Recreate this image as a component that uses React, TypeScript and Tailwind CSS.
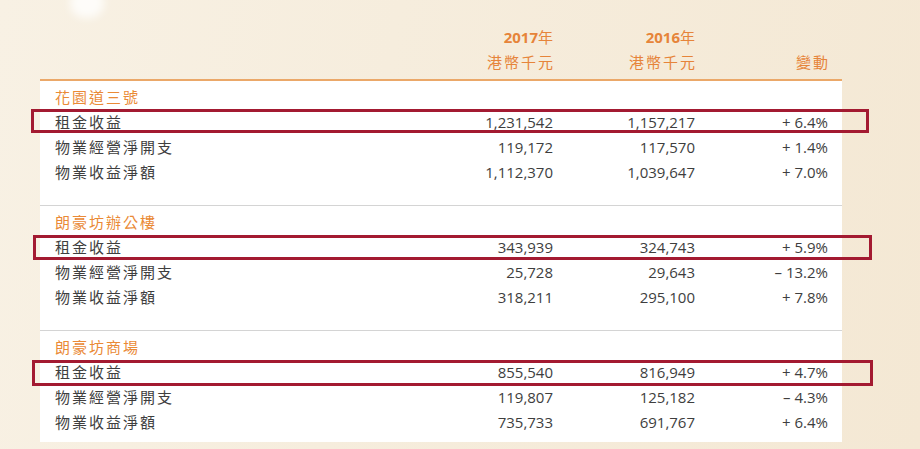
import React from "react";

type Row = { label: string; a: string; b: string; c: string };
type Section = { title: string; rows: Row[] };

const sections: Section[] = [
  {
    title: "花園道三號",
    rows: [
      { label: "租金收益", a: "1,231,542", b: "1,157,217", c: "+ 6.4%" },
      { label: "物業經營淨開支", a: "119,172", b: "117,570", c: "+ 1.4%" },
      { label: "物業收益淨額", a: "1,112,370", b: "1,039,647", c: "+ 7.0%" },
    ],
  },
  {
    title: "朗豪坊辦公樓",
    rows: [
      { label: "租金收益", a: "343,939", b: "324,743", c: "+ 5.9%" },
      { label: "物業經營淨開支", a: "25,728", b: "29,643", c: "– 13.2%" },
      { label: "物業收益淨額", a: "318,211", b: "295,100", c: "+ 7.8%" },
    ],
  },
  {
    title: "朗豪坊商場",
    rows: [
      { label: "租金收益", a: "855,540", b: "816,949", c: "+ 4.7%" },
      { label: "物業經營淨開支", a: "119,807", b: "125,182", c: "– 4.3%" },
      { label: "物業收益淨額", a: "735,733", b: "691,767", c: "+ 6.4%" },
    ],
  },
];

const font = { fontFamily: '"Open Sans", "Noto Sans CJK TC", sans-serif' };

export default function App() {
  return (
    <div
      className="relative w-[920px] h-[449px] overflow-hidden bg-[linear-gradient(100deg,#f8f1e4_0%,#f6eddd_40%,#f4e8d4_100%)]"
      style={font}
    >
      <div className="absolute left-[70px] top-[-12px] w-[34px] h-[30px] rounded-full bg-white/80 blur-[4px]" />
      {/* header */}
      <div className="relative ml-[40px] w-[802px] pl-[15px] pr-[14px] pt-[26px] pb-[4px] grid grid-cols-[1fr_142px_142px_133px] text-[#e6843a]">
        <div />
        <div className="flex flex-col items-end">
          <div className="h-[23px] leading-[23px] text-[15px]">
            <span className="font-bold">2017</span>
            <span>年</span>
          </div>
          <div className="h-[26px] leading-[26px] text-[15px] tracking-[2px] mr-[-2px]">港幣千元</div>
        </div>
        <div className="flex flex-col items-end">
          <div className="h-[23px] leading-[23px] text-[15px]">
            <span className="font-bold">2016</span>
            <span>年</span>
          </div>
          <div className="h-[26px] leading-[26px] text-[15px] tracking-[2px] mr-[-2px]">港幣千元</div>
        </div>
        <div className="flex flex-col items-end">
          <div className="h-[23px]" />
          <div className="h-[26px] leading-[26px] text-[15px] tracking-[2px] mr-[-2px]">變動</div>
        </div>
      </div>

      {/* panel */}
      <div className="ml-[40px] w-[802px] bg-white border-t-2 border-[#eba869] pb-[7px]">
        {sections.map((s, i) => (
          <div
            key={s.title}
            className={
              i === 0
                ? "pt-[4px] pb-[20px]"
                : i === 1
                ? "pt-[4px] pb-[20px] border-t border-[#d4d4d4]"
                : "pt-[4px] border-t border-[#d4d4d4]"
            }
          >
            <div className="pl-[15px] h-[25px] leading-[25px] text-[15px] tracking-[2px] text-[#ea8a36]">
              {s.title}
            </div>
            {s.rows.map((r) => (
              <div
                key={r.label}
                className="grid grid-cols-[1fr_142px_142px_133px] pl-[15px] pr-[14px] h-[25px] leading-[25px] text-[15px] text-[#3e3e3e]"
              >
                <div className="tracking-[2px]">{r.label}</div>
                <div className="text-right">{r.a}</div>
                <div className="text-right">{r.b}</div>
                <div className="text-right">{r.c}</div>
              </div>
            ))}
          </div>
        ))}
      </div>

      {/* highlight boxes */}
      <div className="absolute left-[31px] top-[109px] w-[838px] h-[24px] border-[3px] border-[#a31a31]" />
      <div className="absolute left-[33px] top-[235px] w-[839px] h-[25px] border-[3px] border-[#a31a31]" />
      <div className="absolute left-[32px] top-[360px] w-[841px] h-[26px] border-[3px] border-[#a31a31]" />
    </div>
  );
}
